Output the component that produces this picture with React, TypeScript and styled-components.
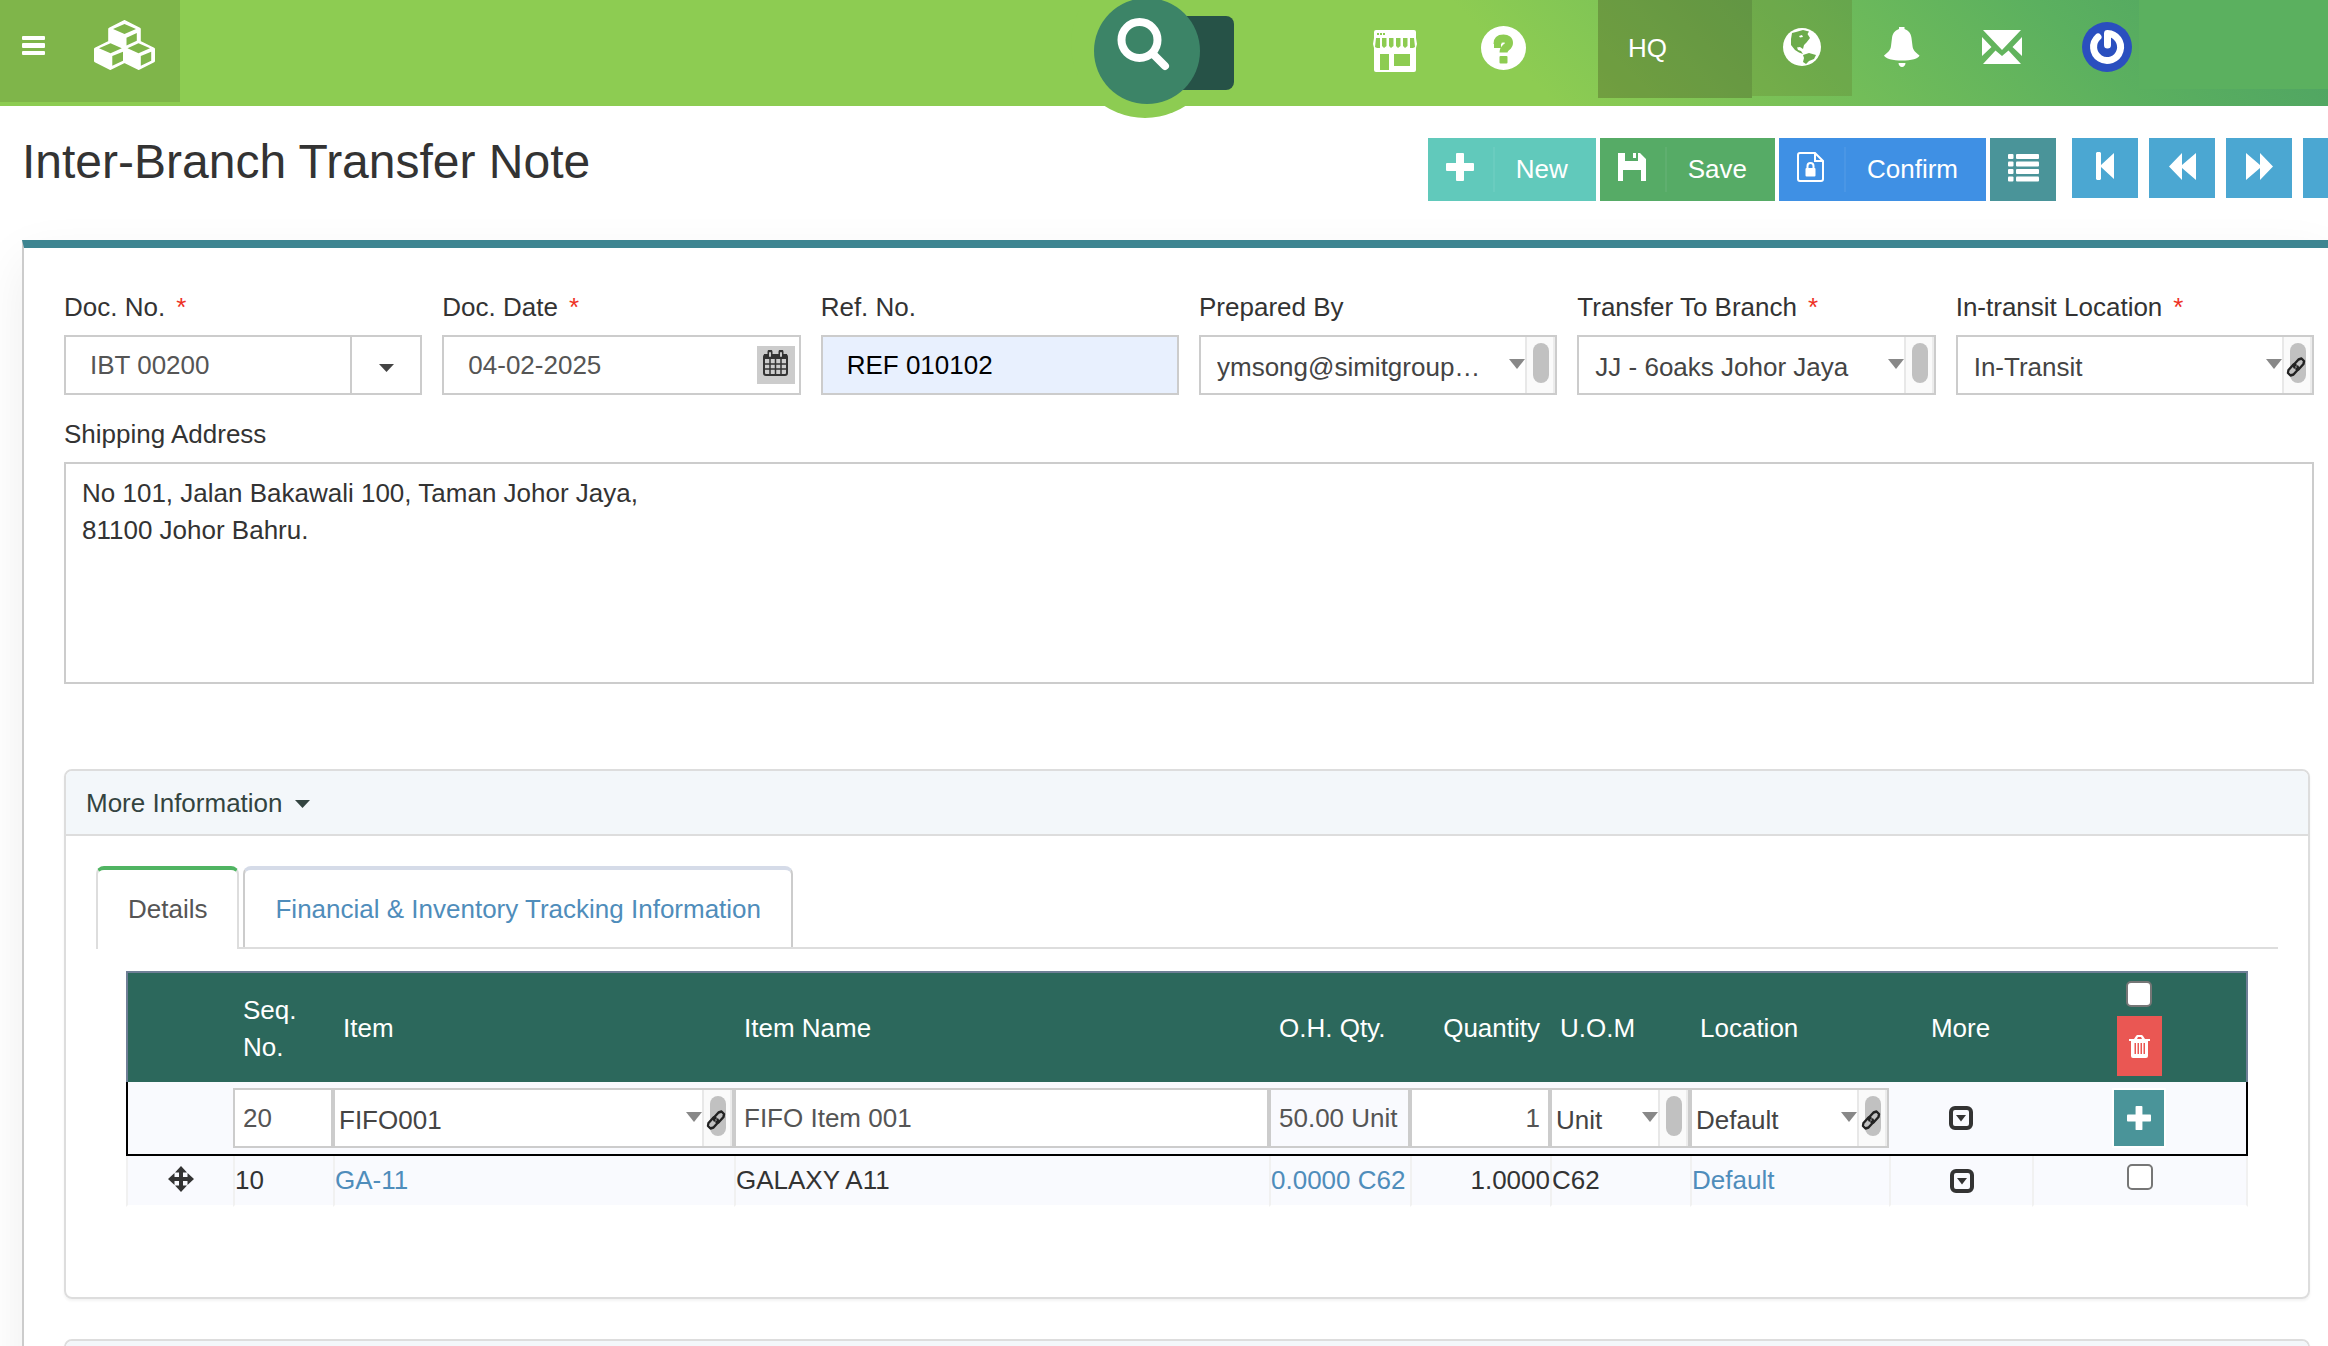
import React from "react";
import styled, { createGlobalStyle } from "styled-components";

const GlobalStyle = createGlobalStyle`
  *, *::before, *::after { box-sizing: border-box; }
  body {
    margin: 0;
    background: #fff;
    color: #333;
    font: 26px/37px "Liberation Sans", Arial, sans-serif;
  }
  button, input, select, textarea { font: inherit; color: inherit; border-radius: 0; }
  button { border: 0; padding: 0; cursor: pointer; }
  a { color: #4f8dbb; text-decoration: none; }
  svg { display: block; flex: none; }
`;

const Page = styled.div`
  height: 100vh;
  overflow: hidden;
`;

/* ---------- top bar ---------- */

const TopBar = styled.header`
  display: flex;
  align-items: flex-start;
  height: 106px;
  background: linear-gradient(45deg, #8dcc52 64%, #5bb05f 88%, #4fa463 98%);
  color: #fff;
`;

const Brand = styled.div`
  display: flex;
  align-items: flex-start;
  gap: 49px;
  width: 180px;
  height: 102px;
  padding: 20px 0 0 22px;
  background: #7fb54a;
`;

const PlainButton = styled.button`
  background: none;
  color: #fff;
`;

const MenuButton = styled(PlainButton)`
  padding-top: 16px;
`;

const Search = styled.div`
  position: relative;
  width: 140px;
  height: 106px;
  margin-left: auto;
  padding: 16px 0 0 50px;

  &::before {
    content: "";
    position: absolute;
    left: -23px;
    top: -30px;
    width: 148px;
    height: 148px;
    border-radius: 50%;
    background: #8dcc52;
  }
`;

const SearchInput = styled.input`
  position: relative;
  width: 90px;
  height: 74px;
  border: 0;
  border-radius: 8px;
  background: #265247;
`;

const SearchButton = styled(PlainButton)`
  position: absolute;
  left: 0;
  top: -2px;
  display: flex;
  align-items: flex-start;
  width: 106px;
  height: 106px;
  padding: 20px 0 0 23px;
  border-radius: 50%;
  background: #3c8467;
`;

const Nav = styled.nav`
  display: flex;
  align-items: flex-start;
  margin-left: 107px;
`;

const NavButton = styled(PlainButton)<{ $w: number; $h?: number; $bg?: string }>`
  display: flex;
  align-items: center;
  justify-content: center;
  width: ${(p) => p.$w}px;
  height: ${(p) => p.$h ?? 96}px;
  padding-bottom: 2px;
  background: ${(p) => p.$bg ?? "none"};
`;

const Branch = styled(NavButton)`
  justify-content: flex-start;
  margin-left: 41px;
  padding-left: 30px;
`;

const Profile = styled(NavButton)`
  justify-content: flex-end;
  padding-right: 7px;
`;

const NavEnd = styled.div`
  width: 189px;
  height: 89px;
  background: #5bb05f;
`;

/* ---------- title and toolbar ---------- */

const TitleRow = styled.div`
  display: flex;
  justify-content: space-between;
  align-items: flex-start;
  height: 134px;
  padding: 32px 0 0 22px;
`;

const Title = styled.h1`
  margin: 0;
  font-size: 48px;
  line-height: 48px;
  font-weight: 400;
`;

const Toolbar = styled.div`
  display: flex;
  align-items: flex-start;
  gap: 4px;
  margin-right: -41px;
`;

const ActionButton = styled.button<{ $bg: string }>`
  display: flex;
  align-items: center;
  height: 63px;
  padding-right: 28px;
  background: ${(p) => p.$bg};
  color: #fff;
`;

const ActionIcon = styled.span`
  display: flex;
  align-items: center;
  width: 67px;
  height: 45px;
  margin-right: 21px;
  padding: 0 0 6px 18px;
  border-right: 2px solid rgba(255, 255, 255, 0.06);
`;

const SquareButton = styled.button<{ $h?: number; $bg: string }>`
  display: flex;
  align-items: center;
  justify-content: center;
  width: 66px;
  height: ${(p) => p.$h ?? 60}px;
  background: ${(p) => p.$bg};
  color: #fff;
`;

const ToolButton = styled(SquareButton)`
  padding-bottom: 4px;
`;

const Pager = styled.div`
  display: flex;
  gap: 11px;
  margin-left: 12px;
`;

/* ---------- document form ---------- */

const Panel = styled.main`
  height: 1200px;
  margin-left: 22px;
  padding: 41px 14px 0 40px;
  border-top: 8px solid #3e8591;
  border-left: 2px solid #ccc;
  background: #fff;
  box-shadow: 0 20px 50px rgba(0, 0, 0, 0.07);
`;

const FieldGrid = styled.div`
  display: grid;
  grid-template-columns: repeat(6, minmax(0, 1fr));
  gap: 21px 20px;
`;

const Field = styled.div<{ $wide?: boolean }>`
  display: flex;
  flex-direction: column;
  gap: 9px;
  ${(p) => p.$wide && "grid-column: 1 / -1;"}
`;

const Required = styled.span`
  margin-left: 11px;
  color: #ee3124;
`;

const Box = styled.div`
  position: relative;
  display: flex;
  width: 100%;
  height: 60px;
  border: 2px solid #ccc;
  background: #fff;
`;

const TextInput = styled.input<{ $pad?: number; $bg?: string; $color?: string; $right?: boolean }>`
  flex: 1;
  width: 100%;
  min-width: 0;
  border: 0;
  padding: 0 ${(p) => p.$pad ?? 24}px;
  background: ${(p) => p.$bg ?? "#fff"};
  color: ${(p) => p.$color ?? "#555"};
  text-align: ${(p) => (p.$right ? "right" : "left")};
`;

const DropButton = styled.button`
  display: flex;
  align-items: center;
  justify-content: center;
  width: 70px;
  border-left: 2px solid #ccc;
  background: #fff;
  color: #444;
  padding-top: 5px;
`;

const CalendarButton = styled.button`
  display: flex;
  justify-content: center;
  align-items: flex-start;
  width: 38px;
  height: 38px;
  margin: 9px 4px 0 0;
  padding-top: 4px;
  background: #ccc;
  color: #333;
`;

const NativeSelect = styled.select<{ $pad: number }>`
  appearance: none;
  flex: 1;
  min-width: 0;
  border: 0;
  padding: 4px 20px 0 ${(p) => p.$pad}px;
  background: #fff;
  color: #444;
`;

const SelectArrow = styled.span`
  position: absolute;
  right: 30px;
  top: 22px;
  border: 8px solid transparent;
  border-top: 10px solid #888;
  border-bottom: 0;
  pointer-events: none;
`;

const Gutter = styled.div`
  position: relative;
  width: 30px;
  padding: 6px 0 0 6px;
  border-left: 2px solid #e8e8e8;
  border-right: 2px solid #ececec;
  background: #fafafa;
`;

const Thumb = styled.div`
  width: 16px;
  height: 40px;
  border-radius: 8px;
  background: #c1c1c1;
`;

const LinkButton = styled.button`
  position: absolute;
  left: 2px;
  top: 20px;
  background: none;
  color: #222;
`;

const Address = styled.textarea`
  display: block;
  width: 100%;
  height: 222px;
  padding: 11px 16px;
  border: 2px solid #ccc;
  background: #fff;
  resize: none;
`;

/* ---------- more information ---------- */

const Section = styled.section<{ $top: number }>`
  margin: ${(p) => p.$top}px 4px 0 0;
  border: 2px solid #ddd;
  border-radius: 8px;
  box-shadow: 0 2px 3px rgba(0, 0, 0, 0.05);
  overflow: hidden;
`;

const SectionHead = styled.button`
  display: flex;
  align-items: center;
  gap: 12px;
  width: 100%;
  height: 65px;
  padding: 2px 20px 0;
  border-bottom: 2px solid #ddd;
  background: #f3f7fa;
  color: #334440;
`;

const SectionBody = styled.div`
  padding: 30px 30px 90px;
`;

const TabList = styled.div`
  display: flex;
  gap: 4px;
  border-bottom: 2px solid #ddd;
`;

const Tab = styled.button<{ $active?: boolean }>`
  height: ${(p) => (p.$active ? 83 : 81)}px;
  margin-bottom: ${(p) => (p.$active ? -2 : 0)}px;
  padding: ${(p) => (p.$active ? "0 30px" : "2px 30px 0")};
  border: 2px solid ${(p) => (p.$active ? "#ddd" : "#ccc")};
  border-top: 4px solid ${(p) => (p.$active ? "#50b462" : "#d5dbe8")};
  border-bottom: 0;
  border-radius: 8px 8px 0 0;
  background: #fff;
  color: ${(p) => (p.$active ? "#555" : "#4f8dbb")};
`;

const TabPanel = styled.div`
  padding: 22px 30px 0;
`;

const Table = styled.table`
  width: 100%;
  table-layout: fixed;
  border-collapse: separate;
  border-spacing: 0;
`;

const Th = styled.th<{ $align?: string }>`
  height: 111px;
  padding: 2px 10px 0;
  border-top: 2px solid #6f7f96;
  background: #2c685c;
  color: #fff;
  font-weight: 400;
  text-align: ${(p) => p.$align ?? "left"};
  &:first-child { border-left: 2px solid #6f7f96; }
  &:last-child { border-right: 2px solid #6f7f96; }
`;

const EditTd = styled.td`
  height: 74px;
  padding: 6px 0;
  border-bottom: 2px solid #000;
  background: #f9fafe;
  &:first-child { border-left: 2px solid #000; }
  &:last-child { border-right: 2px solid #000; }
`;

const Td = styled.td<{ $right?: boolean }>`
  height: 51px;
  padding: 0;
  border-left: 2px solid #f1f1f1;
  border-bottom: 2px solid #fff;
  background: #f9fafe;
  text-align: ${(p) => (p.$right ? "right" : "left")};
  white-space: nowrap;
  &:last-child { border-right: 2px solid #f1f1f1; }
`;

const Stack = styled.div`
  display: flex;
  flex-direction: column;
  align-items: center;
  gap: 9px;
`;

const Center = styled.div<{ $pb?: number }>`
  display: flex;
  justify-content: center;
  padding-bottom: ${(p) => p.$pb ?? 0}px;
`;

const Check = styled.input`
  appearance: none;
  width: 26px;
  height: 26px;
  margin: 0;
  border: 2px solid #767676;
  border-radius: 5px;
  background: #fff;
`;

const DeleteButton = styled(SquareButton)`
  width: 45px;
`;

const AddButton = styled(SquareButton)`
  width: 50px;
  box-shadow: 0 0 0 2px #fff;
`;

const IconButton = styled.button`
  background: none;
  color: #333;
`;

/* ---------- icons ---------- */

const MenuIcon = () => (
  <svg width="23" height="19" fill="currentColor" aria-hidden="true">
    <rect width="23" height="4" rx="1" />
    <rect y="7" width="23" height="5" rx="1" />
    <rect y="15" width="23" height="4" rx="1" />
  </svg>
);

const CubesIcon = () => (
  <svg width="61" height="50" viewBox="94 20 61 50" aria-hidden="true">
    <path
      fill="#fff"
      stroke="#fff"
      strokeWidth="3"
      strokeLinejoin="round"
      d="M124.5 21.5 139.3 29V42L153.500 49V61L138.700 68.500 124.500 61.500 110.300 68.500 95.500 61V49L109.700 42V29Z"
    />
    <path
      fill="#7fb54a"
      d="M124.500 24 136 29 124.500 34 113 29ZM126.500 37.700 136.800 33V40.700L126.500 45.600ZM110.500 43.300 121.800 48.300 110.500 53.300 99 48.300ZM112.300 56 123 51.700V60.700L112.300 65.700ZM138.500 43.300 150 48.300 138.500 53.300 127.500 48.300ZM140.800 56 151.200 51.700V60.700L140.800 65.700Z"
    />
  </svg>
);

const SearchIcon = () => (
  <svg width="54" height="54" fill="none" stroke="currentColor" aria-hidden="true">
    <circle cx="22.500" cy="22" r="18" strokeWidth="8" />
    <path d="M36 36 48 48" strokeWidth="8" strokeLinecap="round" />
  </svg>
);

const StoreIcon = () => (
  <svg width="44" height="42" fill="currentColor" fillRule="evenodd" aria-hidden="true">
    <path d="M3 0H41a2 2 0 0 1 2 2V8L44 14 43 18V40a2 2 0 0 1-2 2H3a2 2 0 0 1-2-2V18L0 14 1 8V2A2 2 0 0 1 3 0ZM4 3V5H6V3ZM7 3V5H9V3ZM10 3V5H12V3ZM3 8 2 17 4 18H7V8ZM9 8V16L11 18 13.500 16V8ZM16 8V16L18 18 20.500 16V8ZM23 8V16L25 18 27.500 16V8ZM30 8V16L32 18 34.500 16V8ZM37 8V18H40L42 17 41 8ZM7 24V40H16V24ZM21 24V36H37V24Z" />
  </svg>
);

const HelpIcon = () => (
  <svg width="45" height="44" aria-hidden="true">
    <ellipse cx="22.500" cy="22" rx="22.500" ry="22" fill="#fff" />
    <path d="M13 18H20M16.500 18C16.500 13 19 12.500 22.500 12.500 26 12.500 28 14 28 17 28 21.500 22.500 21 22.500 26.500" fill="none" stroke="#8dcc52" strokeWidth="8" />
    <rect x="18.500" y="30" width="8" height="7.500" rx="1" fill="#8dcc52" />
  </svg>
);

const GlobeIcon = () => (
  <svg width="38" height="38" aria-hidden="true">
    <circle cx="19" cy="19" r="19" fill="#fff" />
    <path
      fill="#6cab4b"
      fillRule="evenodd"
      d="M9 5 13 4 20 2 26 3.500 24.500 6 27 10 23.500 14.500 21 17 20 21 17 19 14 19.500 15 22 18 23 20 26 16 24.500 12 22 8 17 8 11ZM16 8 19 7 20 9 17 9.500ZM20 27 26 25 33 27 31 31 26 33 23 36 20 34 21 30Z"
    />
  </svg>
);

const BellIcon = () => (
  <svg width="36" height="40" fill="currentColor" aria-hidden="true">
    <path d="M15 0H20.500V2C25 3.500 27 7 27.500 11L28.500 19C29 23 31 25 35.500 28.500 35 31.500 27 33.500 18 33.500S1 31.500 0 28.500C4.500 25 6.500 23 7 19L8 11C8.500 7 10.500 3.500 15 2ZM14.500 36H21.500C21.500 38 20 40 18 40S14.500 38 14.500 36Z" />
  </svg>
);

const MailIcon = () => (
  <svg width="40" height="34" fill="currentColor" aria-hidden="true">
    <path d="M1 0H39L20 20ZM0 7 9.500 17 0 26ZM40 7 30.500 17 40 26ZM1 34 13.500 20.500 20 26 26.500 20.500 39 34Z" />
  </svg>
);

const PowerIcon = () => (
  <svg width="50" height="50" aria-hidden="true">
    <circle cx="25" cy="25" r="25" fill="#2a4fbf" />
    <path d="M16 15A13.500 13.500 0 1 0 25.500 11.500V23" fill="none" stroke="#fff" strokeWidth="7" strokeLinecap="round" strokeLinejoin="round" />
  </svg>
);

const PlusIcon = ({ size = 28 }: { size?: number }) => (
  <svg width={size} height={size} viewBox="0 0 28 28" fill="currentColor" aria-hidden="true">
    <rect x="10" width="8" height="28" rx="1" />
    <rect y="10" width="28" height="8" rx="1" />
  </svg>
);

const SaveIcon = () => (
  <svg width="28" height="28" fill="currentColor" fillRule="evenodd" aria-hidden="true">
    <path d="M0 0H7V8H20V0H22L28 6V28H23V17H5V28H0ZM15 0H18V5H15Z" />
  </svg>
);

const ConfirmIcon = () => (
  <svg width="27" height="30" aria-hidden="true">
    <path d="M3 1H18L26 9V27a2 2 0 0 1-2 2H3a2 2 0 0 1-2-2V3A2 2 0 0 1 3 1ZM18 1V9H26" fill="none" stroke="currentColor" strokeWidth="2" />
    <rect x="8.500" y="16" width="10" height="8.500" rx="1" fill="currentColor" />
    <path d="M10.500 17V14a3 3 0 0 1 6 0V17" fill="none" stroke="currentColor" strokeWidth="2" />
  </svg>
);

const ListIcon = () => (
  <svg width="31" height="28" fill="currentColor" aria-hidden="true">
    {[0, 7.5, 15, 22.5].map((y) => (
      <g key={y}>
        <rect y={y} width="5.500" height="5" rx="1" />
        <rect x="8" y={y} width="23" height="5" rx="1" />
      </g>
    ))}
  </svg>
);

const FirstIcon = () => (
  <svg width="18" height="28" fill="currentColor" aria-hidden="true">
    <path d="M0 1 1 0H4L5 1V13L18 1V27L5 15V27L4 28H1L0 27Z" />
  </svg>
);

const RewindIcon = ({ flip }: { flip?: boolean }) => (
  <svg width="27" height="27" fill="currentColor" aria-hidden="true">
    <path d={flip ? "M27 13.500 14 27V15L0 27V0L14 12V0Z" : "M0 13.500 13 0V12L27 0V27L13 15V27Z"} />
  </svg>
);

const CaretIcon = () => (
  <svg width="15" height="8" fill="currentColor" aria-hidden="true">
    <path d="M0 0H15L7.500 8Z" />
  </svg>
);

const CalendarIcon = () => (
  <svg width="25" height="26" aria-hidden="true">
    <rect x="1" y="5" width="23" height="20" rx="2" fill="none" stroke="currentColor" strokeWidth="2" />
    <path d="M1 4H24V9H1Z" fill="currentColor" />
    <path d="M7 9V24M12.500 9V24M18 9V24M2 14H23M2 19H23" stroke="currentColor" strokeWidth="1.500" />
    <path d="M7 2V6M18 2V6" stroke="currentColor" strokeWidth="5" strokeLinecap="round" />
    <path d="M7 3V6M18 3V6" stroke="#ccc" strokeWidth="2" strokeLinecap="round" />
  </svg>
);

const ChainIcon = () => (
  <svg width="20" height="20" viewBox="0 0 20 20" fill="none" stroke="currentColor" strokeWidth="2.400" strokeLinecap="round" strokeLinejoin="round" aria-hidden="true">
    <path d="M8.500 10.500 7.500 8 12.500 2.500 15.500 1.500 18 4 17.500 7 12.500 12.500 10.500 12" />
    <path d="M11.500 9.500 12.500 12 7.500 17.500 4.500 18.500 2 16 2.500 13 7.500 7.500 9.500 8" />
  </svg>
);

const TrashIcon = () => (
  <svg width="21" height="23" fill="currentColor" fillRule="evenodd" aria-hidden="true">
    <path d="M0 4H5L7 1 8 0H13L14 1 16 4H21V6H19V21a2 2 0 0 1-2 2H4a2 2 0 0 1-2-2V6H0ZM8 4H13L12 2H9ZM5.500 8V19H7V8ZM8.500 8V19H10V8ZM11.500 8V19H13V8ZM14.500 8V19H16V8Z" />
  </svg>
);

const CaretSquareIcon = () => (
  <svg width="24" height="24" aria-hidden="true">
    <rect x="2" y="2" width="20" height="20" rx="4" fill="none" stroke="currentColor" strokeWidth="4" />
    <path d="M7 9H17L12 15.500Z" fill="currentColor" />
  </svg>
);

const MoveIcon = () => (
  <svg width="26" height="26" fill="#333" role="img" aria-label="Drag to reorder">
    <path d="M13 0 19 6.500H15V11H19.500V7L26 13 19.500 19V15H15V19.500H19L13 26 7 19.500H11V15H6.500V19L0 13 6.500 7V11H11V6.500H7Z" />
  </svg>
);

/* ---------- composed controls ---------- */

type SelectBoxProps = { id?: string; label?: string; value: string; pad?: number; link?: boolean };

const SelectBox = ({ id, label, value, pad = 16, link }: SelectBoxProps) => (
  <Box>
    <NativeSelect id={id} aria-label={label} $pad={pad}>
      <option>{value}</option>
    </NativeSelect>
    <SelectArrow />
    <Gutter>
      <Thumb />
      {link && (
        <LinkButton type="button" aria-label="Open record">
          <ChainIcon />
        </LinkButton>
      )}
    </Gutter>
  </Box>
);

type LabeledProps = { id: string; label: string; required?: boolean; wide?: boolean; children: React.ReactNode };

const Labeled = ({ id, label, required, wide, children }: LabeledProps) => (
  <Field $wide={wide}>
    <label htmlFor={id}>
      {label}
      {required && <Required>*</Required>}
    </label>
    {children}
  </Field>
);

const MoreButton = () => (
  <Center>
    <IconButton type="button" aria-label="More options">
      <CaretSquareIcon />
    </IconButton>
  </Center>
);

const columnWidths = [107, 100, 401, undefined, 141, 140, 140, 199, 143, 216];

export default function App() {
  return (
    <Page>
      <GlobalStyle />
      <TopBar>
        <Brand>
          <MenuButton aria-label="Menu"><MenuIcon /></MenuButton>
          <CubesIcon />
        </Brand>
        <Search>
          <SearchInput type="text" aria-label="Search" />
          <SearchButton aria-label="Run search"><SearchIcon /></SearchButton>
        </Search>
        <Nav>
          <NavButton $w={108} $h={104} aria-label="Store"><StoreIcon /></NavButton>
          <NavButton $w={108} $h={98} aria-label="Help"><HelpIcon /></NavButton>
          <Branch $w={154} $h={98} $bg="rgba(60, 60, 20, 0.3)">HQ</Branch>
          <NavButton $w={100} $bg="rgba(80, 60, 0, 0.15)" aria-label="Language"><GlobeIcon /></NavButton>
          <NavButton $w={100} aria-label="Notifications"><BellIcon /></NavButton>
          <NavButton $w={100} aria-label="Messages"><MailIcon /></NavButton>
          <Profile $w={87} aria-label="Profile"><PowerIcon /></Profile>
          <NavEnd />
        </Nav>
      </TopBar>

      <TitleRow>
        <Title>Inter-Branch Transfer Note</Title>
        <Toolbar>
          <ActionButton $bg="#61c9bb"><ActionIcon><PlusIcon /></ActionIcon>New</ActionButton>
          <ActionButton $bg="#56ab66"><ActionIcon><SaveIcon /></ActionIcon>Save</ActionButton>
          <ActionButton $bg="#3f90e4"><ActionIcon><ConfirmIcon /></ActionIcon>Confirm</ActionButton>
          <ToolButton $bg="#4a9499" $h={63} aria-label="List"><ListIcon /></ToolButton>
          <Pager>
            <ToolButton $bg="#4ba7d2" aria-label="First"><FirstIcon /></ToolButton>
            <ToolButton $bg="#4ba7d2" aria-label="Previous"><RewindIcon /></ToolButton>
            <ToolButton $bg="#4ba7d2" aria-label="Next"><RewindIcon flip /></ToolButton>
            <ToolButton $bg="#4ba7d2" aria-label="Last" />
          </Pager>
        </Toolbar>
      </TitleRow>

      <Panel>
        <FieldGrid>
          <Labeled id="doc-no" label="Doc. No." required>
            <Box>
              <TextInput id="doc-no" defaultValue="IBT 00200" />
              <DropButton type="button" aria-label="Choose numbering"><CaretIcon /></DropButton>
            </Box>
          </Labeled>
          <Labeled id="doc-date" label="Doc. Date" required>
            <Box>
              <TextInput id="doc-date" defaultValue="04-02-2025" />
              <CalendarButton type="button" aria-label="Pick a date"><CalendarIcon /></CalendarButton>
            </Box>
          </Labeled>
          <Labeled id="ref-no" label="Ref. No.">
            <Box>
              <TextInput id="ref-no" defaultValue="REF 010102" $bg="#e8f0fe" $color="#000" />
            </Box>
          </Labeled>
          <Labeled id="prepared-by" label="Prepared By">
            <SelectBox id="prepared-by" value="ymsong@simitgroup…" />
          </Labeled>
          <Labeled id="branch" label="Transfer To Branch" required>
            <SelectBox id="branch" value="JJ - 6oaks Johor Jaya" />
          </Labeled>
          <Labeled id="transit" label="In-transit Location" required>
            <SelectBox id="transit" value="In-Transit" link />
          </Labeled>
          <Labeled id="address" label="Shipping Address" wide>
            <Address
              id="address"
              defaultValue={"No 101, Jalan Bakawali 100, Taman Johor Jaya,\n81100 Johor Bahru."}
            />
          </Labeled>
        </FieldGrid>

        <Section $top={85}>
          <SectionHead type="button">More Information <CaretIcon /></SectionHead>
          <SectionBody>
            <TabList role="tablist">
              <Tab role="tab" aria-selected="true" $active>Details</Tab>
              <Tab role="tab" aria-selected="false">Financial &amp; Inventory Tracking Information</Tab>
            </TabList>
            <TabPanel role="tabpanel">
              <Table>
                <colgroup>
                  {columnWidths.map((width, i) => <col key={i} style={{ width }} />)}
                </colgroup>
                <thead>
                  <tr>
                    <Th />
                    <Th>Seq. No.</Th>
                    <Th>Item</Th>
                    <Th>Item Name</Th>
                    <Th>O.H. Qty.</Th>
                    <Th $align="right">Quantity</Th>
                    <Th>U.O.M</Th>
                    <Th>Location</Th>
                    <Th $align="center">More</Th>
                    <Th>
                      <Stack>
                        <Check type="checkbox" aria-label="Select all rows" />
                        <DeleteButton type="button" $bg="#ea5753" aria-label="Delete selected"><TrashIcon /></DeleteButton>
                      </Stack>
                    </Th>
                  </tr>
                </thead>
                <tbody>
                  <tr>
                    <EditTd />
                    <EditTd><Box><TextInput aria-label="Seq. No." defaultValue="20" $pad={8} /></Box></EditTd>
                    <EditTd><SelectBox label="Item" value="FIFO001" pad={4} link /></EditTd>
                    <EditTd><Box><TextInput aria-label="Item Name" defaultValue="FIFO Item 001" $pad={8} /></Box></EditTd>
                    <EditTd><Box><TextInput aria-label="O.H. Qty." defaultValue="50.00 Unit" readOnly $pad={8} $bg="#f9fafe" /></Box></EditTd>
                    <EditTd><Box><TextInput aria-label="Quantity" defaultValue="1" $pad={8} $right /></Box></EditTd>
                    <EditTd><SelectBox label="U.O.M" value="Unit" pad={4} /></EditTd>
                    <EditTd><SelectBox label="Location" value="Default" pad={4} link /></EditTd>
                    <EditTd><MoreButton /></EditTd>
                    <EditTd>
                      <Center>
                        <AddButton type="button" $bg="#4a9499" $h={56} aria-label="Add row"><PlusIcon size={24} /></AddButton>
                      </Center>
                    </EditTd>
                  </tr>
                  <tr>
                    <Td><Center $pb={3}><MoveIcon /></Center></Td>
                    <Td>10</Td>
                    <Td><a href="#item">GA-11</a></Td>
                    <Td>GALAXY A11</Td>
                    <Td><a href="#stock">0.0000 C62</a></Td>
                    <Td $right>1.0000</Td>
                    <Td>C62</Td>
                    <Td><a href="#location">Default</a></Td>
                    <Td><MoreButton /></Td>
                    <Td><Center $pb={7}><Check type="checkbox" aria-label="Select row 10" /></Center></Td>
                  </tr>
                </tbody>
              </Table>
            </TabPanel>
          </SectionBody>
        </Section>

        <Section $top={40}>
          <SectionHead type="button" aria-label="Next section" />
        </Section>
      </Panel>
    </Page>
  );
}
